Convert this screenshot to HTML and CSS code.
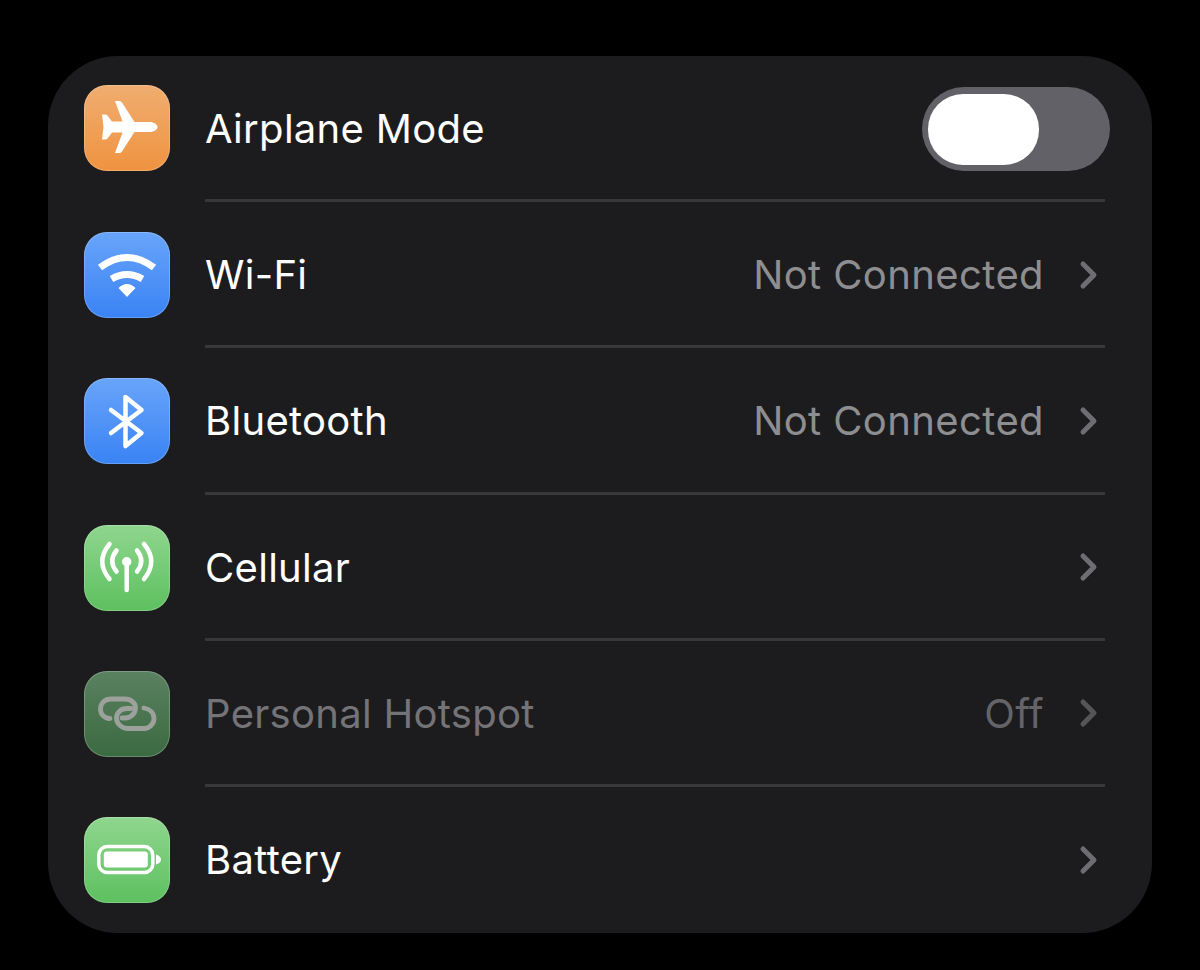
FILE: index.html
```html
<!DOCTYPE html>
<html>
<head>
    <title>Settings</title>
    <link rel="stylesheet" href="styles.css">
</head>
<body>

<div class="card">
    <div class="row">
        <div class="icon orange">
            <svg viewBox="0 0 86 86"><path class="solid" d="M66 37C70 37 73.500 39.500 73.500 42C73.500 44.500 70 47 66 47L50.500 47L38 66.500Q37 68 35 68L31 68L38.500 47.500L28 47.500L23.500 53.500Q23 54.500 21 54.500L18 54.500L19.500 42L18 29.500L21 29.500Q23 29.500 23.500 30.500L28 36.500L38.500 36.500L31 16L35 16Q37 16 38 17.500L50.500 37Z"/></svg>
        </div>
        <div class="row-body">
            <span class="label">Airplane Mode</span>
            <div class="toggle"><div class="thumb"></div></div>
        </div>
    </div>

    <div class="row">
        <div class="icon blue">
            <svg viewBox="0 0 86 86">
                <path class="line wide" d="M16 35.500Q43 15.500 70 35.500"/>
                <path class="line wide" d="M27.500 47Q43 38 58.500 47"/>
                <path class="solid" d="M34.500 56Q43 48 51.500 56L43 65Z"/>
            </svg>
        </div>
        <div class="row-body">
            <span class="label">Wi-Fi</span>
            <span class="value">Not Connected</span>
            <svg class="chevron" viewBox="0 0 20 30"><path d="M4 4L15 15L4 26"/></svg>
        </div>
    </div>

    <div class="row">
        <div class="icon blue">
            <svg viewBox="0 0 86 86"><path class="line" d="M27 32L57.500 55L41.500 68L41.500 19L57.500 32L27 55"/></svg>
        </div>
        <div class="row-body">
            <span class="label">Bluetooth</span>
            <span class="value">Not Connected</span>
            <svg class="chevron" viewBox="0 0 20 30"><path d="M4 4L15 15L4 26"/></svg>
        </div>
    </div>

    <div class="row">
        <div class="icon green">
            <svg viewBox="0 0 86 86">
                <path class="line" d="M25.500 19Q11 36.500 25.500 54"/>
                <path class="line" d="M60 19Q74.500 36.500 60 54"/>
                <path class="line" d="M32.500 25.500Q24 36 32.500 46.500"/>
                <path class="line" d="M53 25.500Q61.500 36 53 46.500"/>
                <circle class="solid" cx="42.700" cy="36.700" r="4.700"/>
                <path class="line" d="M42.700 38L42.700 65"/>
            </svg>
        </div>
        <div class="row-body">
            <span class="label">Cellular</span>
            <svg class="chevron" viewBox="0 0 20 30"><path d="M4 4L15 15L4 26"/></svg>
        </div>
    </div>

    <div class="row dimmed">
        <div class="icon dark-green">
            <svg viewBox="0 0 86 86">
                <path class="line link" d="M26 47.500C20 47.500 16.500 43 16.500 38C16.500 32 21 28 27 28H41C47 28 51.500 32 51.500 36.500C51.500 42.500 47 47 41 47H38"/>
                <path class="line link" d="M60 37C66 38 70 42 70 47.500C70 53 65.500 57.500 60 57.500H44C38 57.500 32.500 53 32.500 47C32.500 41.500 37 37.500 43 37.500H47"/>
            </svg>
        </div>
        <div class="row-body">
            <span class="label">Personal Hotspot</span>
            <span class="value">Off</span>
            <svg class="chevron" viewBox="0 0 20 30"><path d="M4 4L15 15L4 26"/></svg>
        </div>
    </div>

    <div class="row last">
        <div class="icon green">
            <svg viewBox="0 0 86 86">
                <rect class="outline" x="14.800" y="29.500" width="54" height="26" rx="8.500"/>
                <rect class="solid" x="19.800" y="34.500" width="44" height="16" rx="3"/>
                <path class="solid" d="M72 37.500C75.500 38.500 77 40.500 77 42.500C77 44.500 75.500 46.500 72 47.500Z"/>
            </svg>
        </div>
        <div class="row-body">
            <span class="label">Battery</span>
            <svg class="chevron" viewBox="0 0 20 30"><path d="M4 4L15 15L4 26"/></svg>
        </div>
    </div>
</div>

</body>
</html>
```

FILE: styles.css
```css
:root {
    --card-color: #1c1c1e;
    --line-color: #38383a;
    --value-color: #8e8e90;
}

body {
    background: #000;
    color: #fff;
    font-family: 'Inter', 'Liberation Sans', sans-serif;
    margin: 0;
    padding: 56px 48px 37px;
    height: 970px;
    box-sizing: border-box;
    overflow: hidden;
}

.card {
    height: 877px;
    background: var(--card-color);
    border-radius: 70px;
    display: flex;
    flex-direction: column;
    padding-left: 36px;
}

.row {
    flex: 1;
    display: flex;
    align-items: stretch;
}

.icon {
    width: 86px;
    height: 86px;
    flex-shrink: 0;
    align-self: center;
    margin-right: 35px;
    border-radius: 23px;
    box-shadow: inset 0 0 0 1px rgba(255, 255, 255, 0.22);
}

.row:first-child .icon { margin-bottom: 2px; }

.icon svg {
    display: block;
    width: 86px;
    height: 86px;
}

.orange { background: linear-gradient(#f0ad70, #ef9340); }
.blue { background: linear-gradient(#68a4fa, #3a83f4); }
.green { background: linear-gradient(#8fd68e, #5dc05f); }
.dark-green { background: linear-gradient(#5a8160, #3b6a41); }

.solid { fill: #fff; }

.line {
    fill: none;
    stroke: #fff;
    stroke-width: 4.500;
    stroke-linecap: round;
    stroke-linejoin: round;
}

.line.wide { stroke-width: 7; stroke-linecap: butt; }
.line.link { stroke: #9ca19c; stroke-width: 4.800; }

.outline {
    fill: none;
    stroke: #fff;
    stroke-width: 3.500;
}

.row-body {
    flex: 1;
    display: flex;
    align-items: center;
    margin-right: 47px;
    padding-top: 2px;
    padding-right: 7px;
    border-bottom: 3px solid var(--line-color);
}

.row:first-child .row-body { padding-top: 1px; }

.last .row-body { border-bottom: 0; padding-bottom: 2px; }

.label {
    flex: 1;
    font-size: 40px;
    letter-spacing: 0.3px;
}

.value {
    font-size: 40px;
    letter-spacing: 0.4px;
    color: var(--value-color);
    margin-right: 35px;
}

.chevron {
    width: 20px;
    height: 30px;
    margin-right: -1px;
    fill: none;
    stroke: #6e6e72;
    stroke-width: 5;
    stroke-linecap: round;
    stroke-linejoin: round;
}

.dimmed .label { color: #747478; }
.dimmed .value { color: #646468; }
.dimmed .chevron { stroke: #555558; }

.toggle {
    width: 188px;
    height: 84px;
    margin-top: 1px;
    margin-right: -12px;
    padding: 7px 6px;
    box-sizing: border-box;
    border-radius: 42px;
    background: #626167;
}

.thumb {
    width: 111px;
    height: 71px;
    background: #fff;
    border-radius: 35px;
}
```
